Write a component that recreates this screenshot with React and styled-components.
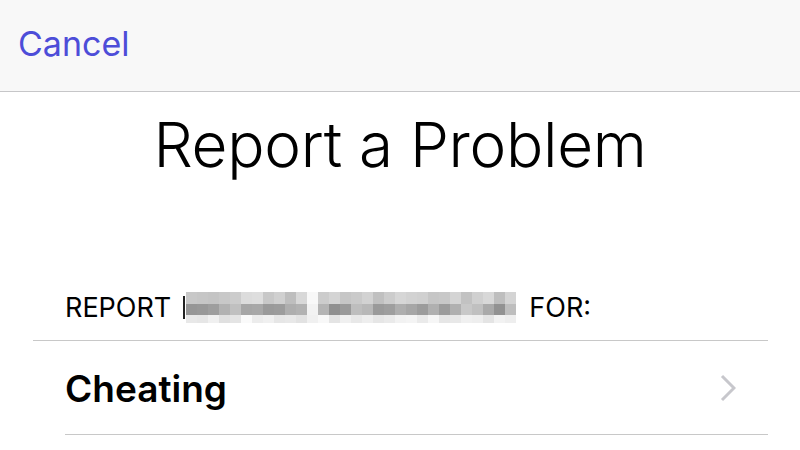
import React from 'react';
import styled, { createGlobalStyle } from 'styled-components';

const GlobalStyle = createGlobalStyle`
  html, body {
    margin: 0;
    padding: 0;
    background: #fff;
  }
  body {
    font-family: Inter, "Noto Sans", sans-serif;
    -webkit-font-smoothing: antialiased;
  }
`;

const Screen = styled.div`
  width: 800px;
  height: 450px;
  overflow: hidden;
  background: #fff;
`;

const NavBar = styled.header`
  height: 92px;
  box-sizing: border-box;
  background: #f8f8f8;
  border-bottom: 1px solid #c6c6c8;
  display: flex;
  align-items: center;
  padding: 0 18px 4px;
`;

const NavButton = styled.button`
  border: 0;
  background: none;
  padding: 0;
  font-family: inherit;
  font-size: 34px;
  font-weight: 400;
  color: #4d4dd8;
  cursor: pointer;
`;

const Title = styled.h1`
  margin: 16px 0 0;
  text-align: center;
  font-size: 62px;
  line-height: 74px;
  font-weight: 300;
  color: #000;
  letter-spacing: -0.3px;
`;

const Section = styled.section`
  margin-top: 105px;
  padding-left: 33px;
`;

const SectionHeader = styled.div`
  display: flex;
  align-items: center;
  gap: 12px;
  padding-left: 32px;
  height: 54px;
  font-size: 27px;
  color: #000;
  border-bottom: 1px solid #c8c8c8;
  margin-right: 32px;
  padding-bottom: 13px;
  box-sizing: border-box;
`;

const Row = styled.div`
  display: flex;
  align-items: center;
  justify-content: space-between;
  margin-left: 32px;
  margin-right: 32px;
  height: 94px;
  box-sizing: border-box;
  border-bottom: 1px solid #c8c8c8;
  padding-right: 32px;
`;

const RowLabel = styled.span`
  font-size: 37px;
  font-weight: 600;
  color: #000;
  padding-top: 2px;
`;

// pixelated placeholder for the hidden player name
const shades = [
  [0xc8, 0xc6, 0xc4, 0xc8, 0xcc, 0xdc, 0xde, 0xc8, 0xd0, 0xbe, 0xd8, 0xf8, 0xcc, 0xd4, 0xc6, 0xca, 0xd2, 0xc0, 0xcc, 0xd6, 0xd2, 0xd0, 0xc6, 0xc8, 0xd4, 0xc2, 0xd0, 0xd8, 0xbe, 0xd4],
  [0x96, 0x98, 0x9e, 0xb2, 0xc0, 0xa6, 0xa8, 0x9a, 0x9c, 0xae, 0xb2, 0xf2, 0xb4, 0x90, 0x9a, 0xbe, 0xb8, 0x9a, 0x9e, 0xae, 0xa6, 0x9c, 0xb0, 0x9c, 0xb0, 0xc8, 0xc0, 0xaa, 0x92, 0xbe],
  [0xe8, 0xe6, 0xf0, 0xe0, 0xe4, 0xfa, 0xec, 0xf0, 0xe6, 0xe8, 0xe2, 0xf0, 0xf8, 0xe4, 0xf0, 0xe8, 0xee, 0xe6, 0xea, 0xf2, 0xf4, 0xea, 0xf6, 0xe6, 0xe8, 0xf0, 0xee, 0xe4, 0xf2, 0xee],
];
const rowHeights = [12, 11, 8];

const Redacted = () => {
  let y = 0;
  return (
    <svg width="334" height="31" viewBox="0 0 334 31" style={{ display: 'block' }}>
      <rect x="0" y="4" width="2" height="23" fill="#222" />
      {shades.map((row, r) => {
        const top = y;
        y += rowHeights[r];
        return row.map((v, c) => {
          const hex = v.toString(16);
          return (
            <rect
              key={`${r}-${c}`}
              x={3 + c * 11}
              y={top}
              width="11"
              height={rowHeights[r]}
              fill={`#${hex}${hex}${hex}`}
            />
          );
        });
      })}
    </svg>
  );
};

const Chevron = () => (
  <svg width="16" height="28" viewBox="0 0 16 28">
    <path d="M2 2 L14 14 L2 26" fill="none" stroke="#c7c7cc" strokeWidth="3" />
  </svg>
);

const App = () => (
  <Screen>
    <GlobalStyle />
    <NavBar>
      <NavButton>Cancel</NavButton>
    </NavBar>
    <Title>Report a Problem</Title>
    <Section>
      <SectionHeader>
        <span>REPORT</span>
        <Redacted />
        <span>FOR:</span>
      </SectionHeader>
      <Row>
        <RowLabel>Cheating</RowLabel>
        <Chevron />
      </Row>
    </Section>
  </Screen>
);

export default App;
